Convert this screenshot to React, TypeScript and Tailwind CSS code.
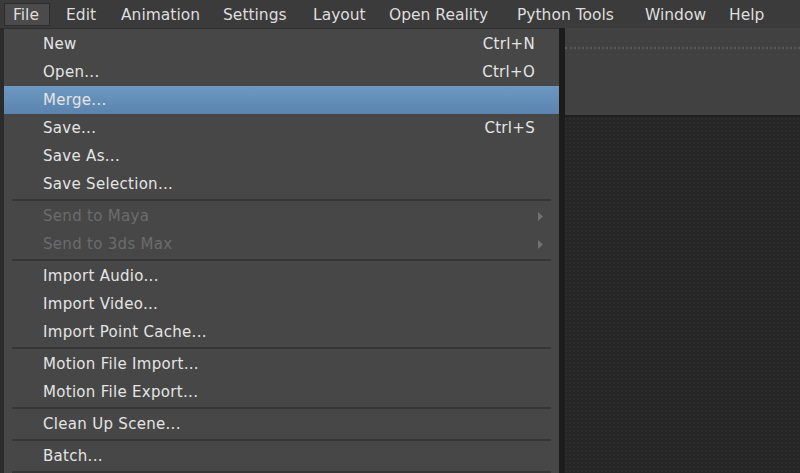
import { Fragment } from "react";

type Item =
  | { kind: "item"; label: string; shortcut?: string; disabled?: boolean; sub?: boolean; active?: boolean }
  | { kind: "sep" };

// label + width of each menu bar slot (File is the open one)
const menuBar: [string, string][] = [
  ["Edit", "w-[55px]"],
  ["Animation", "w-[102px]"],
  ["Settings", "w-[90px]"],
  ["Layout", "w-[76px]"],
  ["Open Reality", "w-[128px]"],
  ["Python Tools", "w-[128px]"],
  ["Window", "w-[84px]"],
  ["Help", "w-[60px]"],
];

const fileMenu: Item[] = [
  { kind: "item", label: "New", shortcut: "Ctrl+N" },
  { kind: "item", label: "Open...", shortcut: "Ctrl+O" },
  { kind: "item", label: "Merge...", active: true },
  { kind: "item", label: "Save...", shortcut: "Ctrl+S" },
  { kind: "item", label: "Save As..." },
  { kind: "item", label: "Save Selection..." },
  { kind: "sep" },
  { kind: "item", label: "Send to Maya", disabled: true, sub: true },
  { kind: "item", label: "Send to 3ds Max", disabled: true, sub: true },
  { kind: "sep" },
  { kind: "item", label: "Import Audio..." },
  { kind: "item", label: "Import Video..." },
  { kind: "item", label: "Import Point Cache..." },
  { kind: "sep" },
  { kind: "item", label: "Motion File Import..." },
  { kind: "item", label: "Motion File Export..." },
  { kind: "sep" },
  { kind: "item", label: "Clean Up Scene..." },
  { kind: "sep" },
  { kind: "item", label: "Batch..." },
  { kind: "sep" },
];

function MenuRow({ item }: { item: Item }) {
  if (item.kind === "sep") {
    return (
      <div className="h-[4px] flex items-center px-[8px]">
        <div className="h-[2px] w-full bg-[#363636]" />
      </div>
    );
  }
  return (
    <div
      className={
        "h-[28px] flex items-center pl-[39px] pr-[24px] tracking-[0.3px] " +
        (item.active ? "bg-gradient-to-b from-[#6d98c2] to-[#5a84ae]" : "")
      }
    >
      <span className={"flex-1 " + (item.disabled ? "text-[#6c6c6c]" : "text-[#e4e4e4]")}>{item.label}</span>
      {item.shortcut && <span className="text-[#e4e4e4]">{item.shortcut}</span>}
      {item.sub && (
        <svg width="5" height="9" viewBox="0 0 5 9" className="-mr-[8px]">
          <path d="M0 0 L5 4.5 L0 9 Z" fill="#727272" />
        </svg>
      )}
    </div>
  );
}

export default function App() {
  return (
    <div
      className="w-[800px] h-[473px] relative overflow-hidden bg-[#262626] text-[15px] leading-none"
      style={{ fontFamily: '"DejaVu Sans", "Noto Sans CJK JP", sans-serif' }}
    >
      {/* menu bar */}
      <div className="h-[28px] flex items-center bg-[#3b3b3b] pl-[4px] text-[15.5px] text-[#dedede]">
        <div className="h-[23px] w-[46px] mr-[16px] flex items-center pl-[8px] pt-[3px] bg-[#4b4b4b] border border-[#2c2c2c]">
          File
        </div>
        {menuBar.map(([m, w]) => (
          <div key={m} className={"h-[23px] flex items-center pt-[3px] " + w}>
            {m}
          </div>
        ))}
      </div>

      {/* workspace behind the menu */}
      <div className="flex flex-col h-[445px]">
        <div className="h-[87px] bg-[#414141] pt-[19px] pl-[565px]">
          <div className="h-[2px] border-t-2 border-dotted border-[#5a5a5a]" />
        </div>
        <div className="h-[2px] bg-[#1f1f1f]" />
        <div className="flex-1 bg-[#262626] bg-[radial-gradient(#2c2c2c_1px,transparent_1px)] bg-[size:4px_4px]" />
      </div>

      {/* File dropdown */}
      <div className="absolute left-0 top-[28px] flex">
        <div className="w-[4px] h-[445px] bg-[#2b2b2b]" />
        <div className="w-[555px] h-[445px] bg-[#474747] pt-[1px] border-t border-[#2f2f2f]">
          {fileMenu.map((it, i) => (
            <Fragment key={i}>
              <MenuRow item={it} />
            </Fragment>
          ))}
        </div>
        <div className="w-[6px] h-[445px] bg-[#1c1c1c]" />
      </div>
    </div>
  );
}
